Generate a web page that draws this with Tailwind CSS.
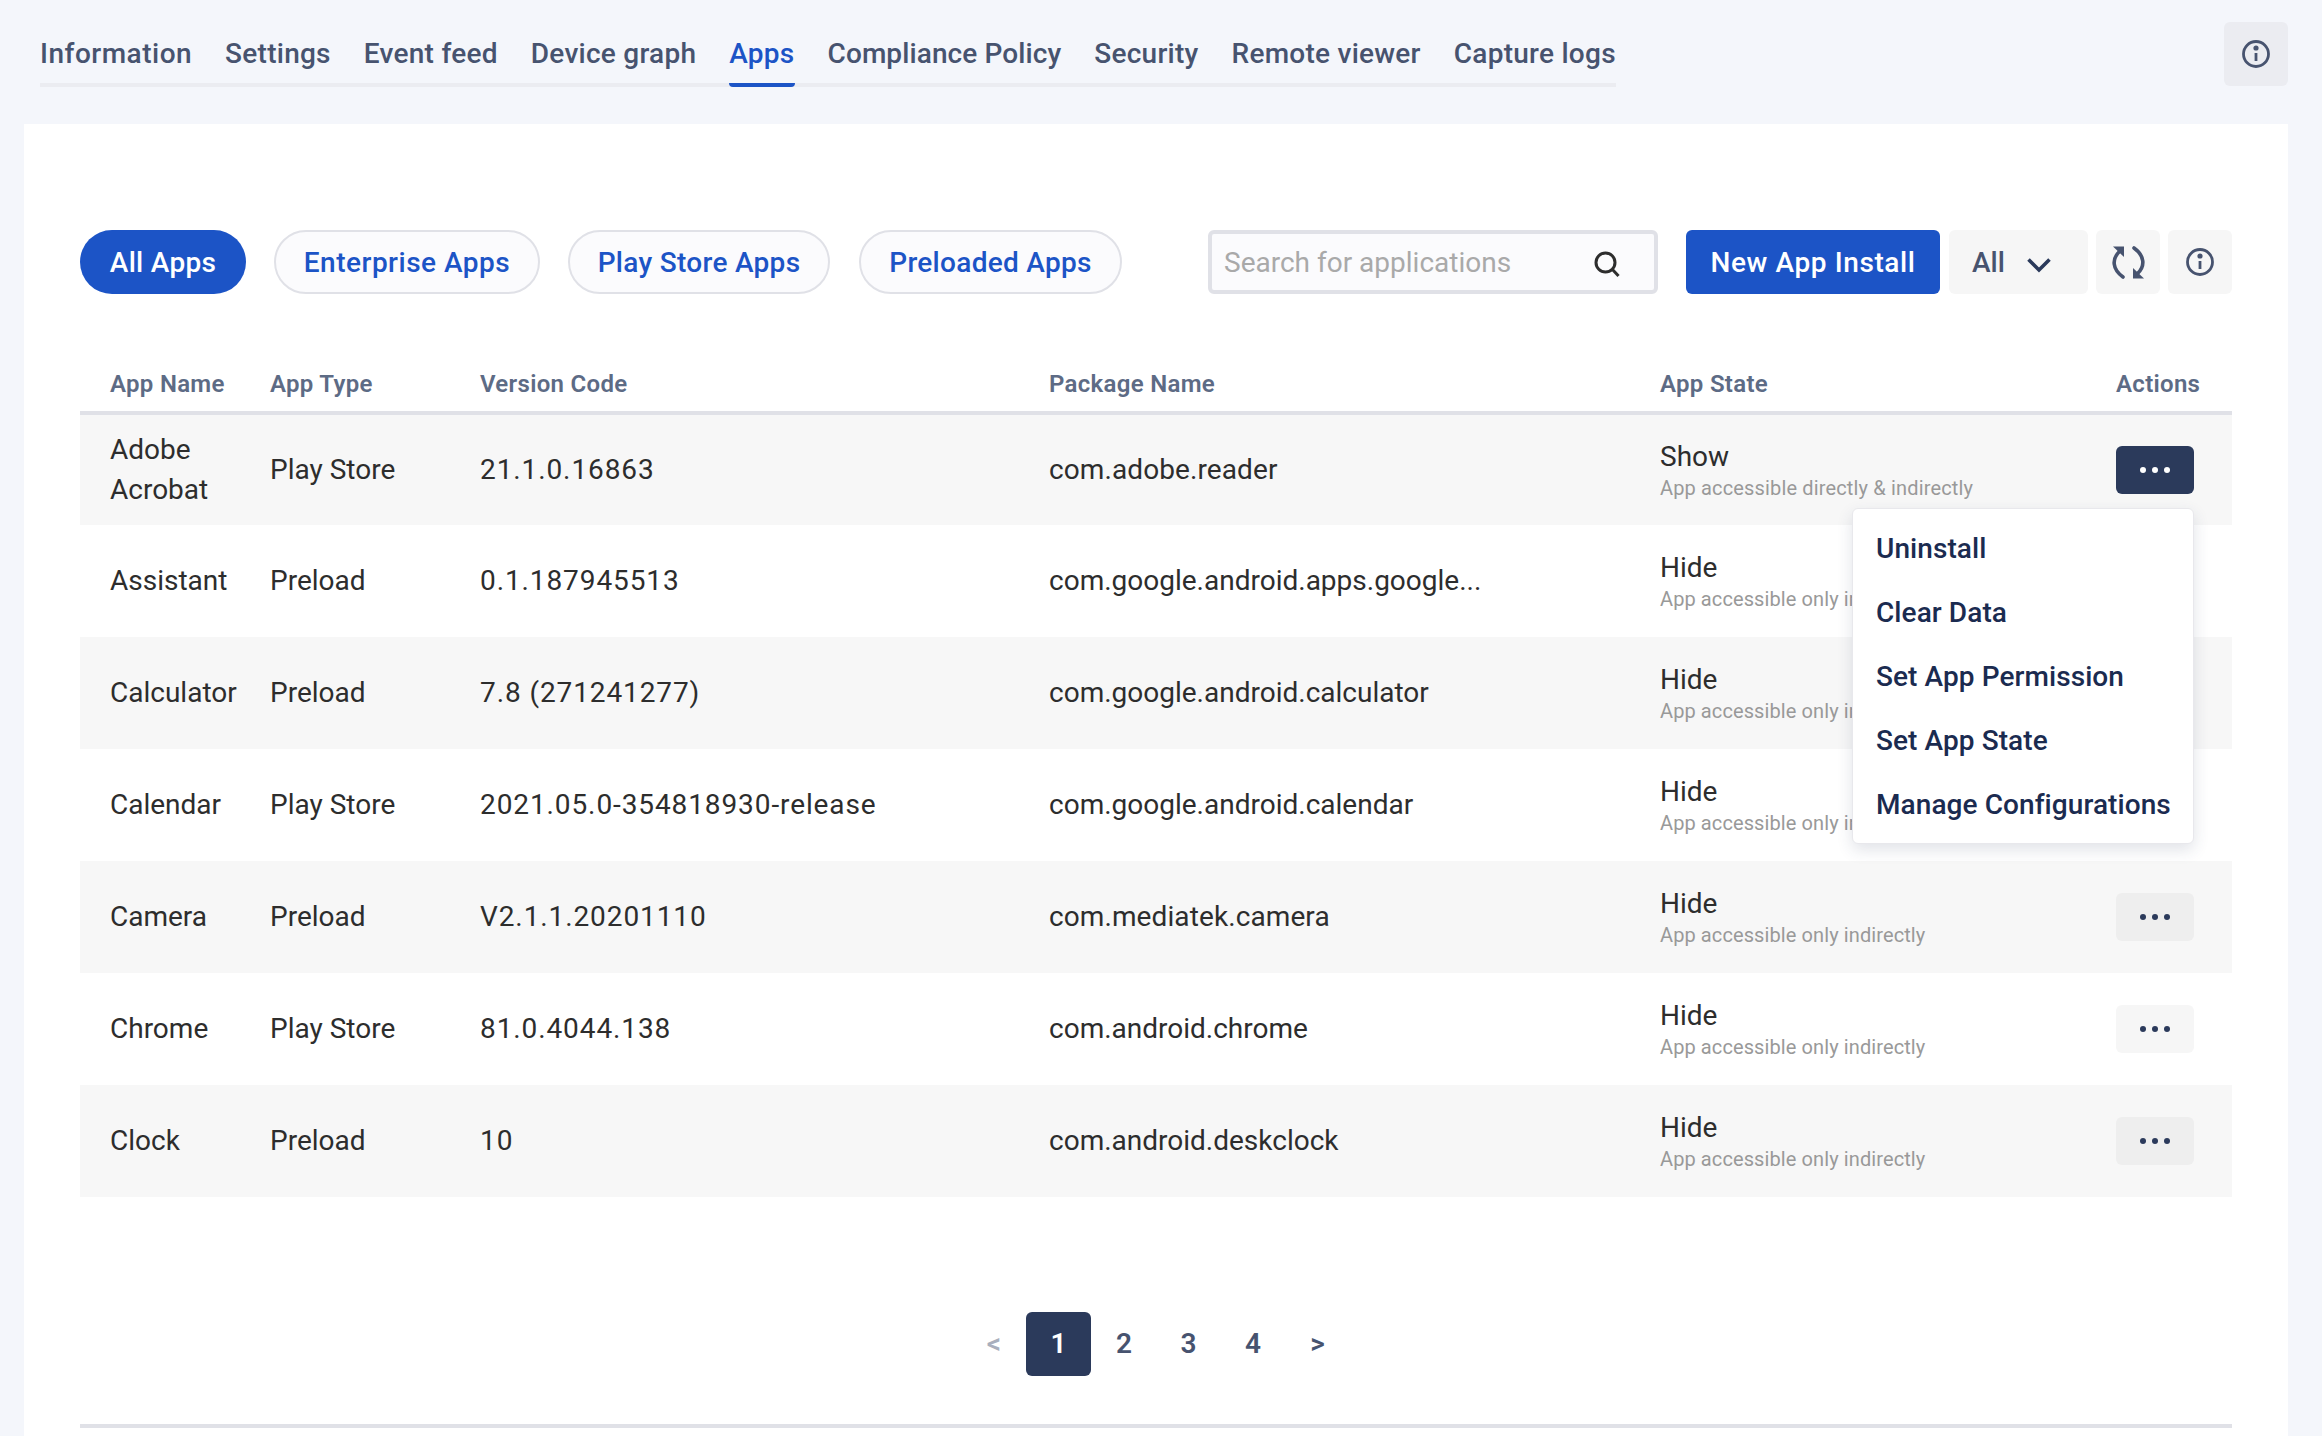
<!DOCTYPE html>
<html lang="en">
<head>
    <meta charset="UTF-8">
    <title>Apps</title>
    <script src="https://cdn.jsdelivr.net/npm/@tailwindcss/browser@4"></script>
</head>
<body class="bg-[#f4f6fb] font-['Roboto',sans-serif] text-[28px] text-[#2d2d2d] h-[1436px] overflow-hidden">
    <!-- tabs -->
    <div class="flex justify-between items-start pl-[40px] pr-[34px] pt-[22px] h-[124px]">
        <div class="flex gap-[33px] border-b-4 border-[#ebecf1] h-[65px] text-[#47536f] font-medium leading-[64px] tracking-[0.26px]">
            <a class="h-[65px] tracking-[0.5px]">Information</a>
            <a class="h-[65px]">Settings</a>
            <a class="h-[65px]">Event feed</a>
            <a class="h-[65px]">Device graph</a>
            <a class="h-[65px] text-[#1c54c6] border-b-4 border-[#1c54c6] rounded-b-sm">Apps</a>
            <a class="h-[65px] tracking-[0.1px]">Compliance Policy</a>
            <a class="h-[65px]">Security</a>
            <a class="h-[65px]">Remote viewer</a>
            <a class="h-[65px]">Capture logs</a>
        </div>
        <button class="w-[64px] h-[64px] rounded-md bg-[#ebecf1] flex items-center justify-center">
            <svg width="30" height="30" viewBox="0 0 30 30" fill="none" stroke="#47536f" stroke-width="2.8"><circle cx="15" cy="15" r="12.5"/><path d="M15 14v8"/><circle cx="15" cy="9" r="1.2" fill="#47536f"/></svg>
        </button>
    </div>

    <!-- panel -->
    <div class="relative bg-white ml-[24px] mr-[34px] h-[1312px] px-[56px] pt-[106px]">
        <!-- filters -->
        <div class="flex items-center h-[64px] leading-[66px]">
            <button class="w-[166px] h-[64px] rounded-full bg-[#1c54c6] text-white font-medium tracking-[0.3px]">All Apps</button>
            <button class="ml-[28px] w-[266px] h-[64px] rounded-full bg-[#fbfbfd] border-2 border-[#e0e1e7] text-[#1c54c6] font-medium tracking-[0.5px] leading-[62px]">Enterprise Apps</button>
            <button class="ml-[28px] w-[262px] h-[64px] rounded-full bg-[#fbfbfd] border-2 border-[#e0e1e7] text-[#1c54c6] font-medium tracking-[0.3px] leading-[62px]">Play Store Apps</button>
            <button class="ml-[29px] w-[263px] h-[64px] rounded-full bg-[#fbfbfd] border-2 border-[#e0e1e7] text-[#1c54c6] font-medium tracking-[0.3px] leading-[62px]">Preloaded Apps</button>
            <div class="ml-[86px] w-[450px] h-[64px] rounded-md bg-[#fbfbfd] border-4 border-[#e0e1e7] flex items-center justify-between pl-[12px] pr-[33px]">
                <span class="text-[#a9a9a9] pt-[2px]">Search for applications</span>
                <svg width="28" height="28" viewBox="0 0 28 28" fill="none" stroke="#2d2d2d" stroke-width="3" class="mt-[3px]"><circle cx="12.500" cy="12.500" r="9.500"/><path d="M19 19l6.500 7"/></svg>
            </div>
            <button class="ml-[28px] w-[254px] h-[64px] rounded-md bg-[#1c54c6] text-white font-medium tracking-[0.6px]">New App Install</button>
            <button class="ml-[9px] w-[139px] h-[64px] rounded-md bg-[#f6f6f6] text-[#47536f] font-medium flex items-center pl-[23px] gap-[22px]">
                <span class="pt-[2px]">All</span>
                <svg width="24" height="16" viewBox="0 0 24 16" fill="none" stroke="#2b3a5b" stroke-width="3.6" class="mt-[6px]"><path d="M1.500 2.500L12 13l10.500-10.500"/></svg>
            </button>
            <button class="ml-[8px] w-[64px] h-[64px] rounded-md bg-[#f6f6f6] flex items-center justify-center">
                <svg width="33" height="33" viewBox="0 0 33 33" fill="#47536f" stroke="#47536f" stroke-width="3.600" stroke-linecap="round"><path fill="none" d="M7 6C0 13 0 23 11 31"/><path stroke="none" d="M1 0.500H12V11Z"/><path fill="none" d="M22 2C33 10 33 20 26 27"/><path stroke="none" d="M32 32.500H21V22Z"/></svg>
            </button>
            <button class="ml-[8px] w-[64px] h-[64px] rounded-md bg-[#f6f6f6] flex items-center justify-center">
                <svg width="30" height="30" viewBox="0 0 30 30" fill="none" stroke="#47536f" stroke-width="2.8"><circle cx="15" cy="15" r="12.5"/><path d="M15 14v8"/><circle cx="15" cy="9" r="1.2" fill="#47536f"/></svg>
            </button>
        </div>

        <!-- apps table -->
        <table class="mt-[59px] w-[2152px] table-fixed border-collapse text-left">
            <colgroup>
                <col class="w-[160px]"><col class="w-[210px]"><col class="w-[569px]"><col class="w-[611px]"><col class="w-[456px]"><col class="w-[146px]">
            </colgroup>
            <thead class="text-[24px] text-[#5d6b85] font-semibold tracking-[0.3px]">
                <tr class="h-[60px] border-b-4 border-[#e0e1e7]">
                    <th class="pl-[30px] pt-[4px] font-semibold">App Name</th>
                    <th class="pl-[30px] pt-[4px] font-semibold">App Type</th>
                    <th class="pl-[30px] pt-[4px] font-semibold">Version Code</th>
                    <th class="pl-[30px] pt-[4px] font-semibold">Package Name</th>
                    <th class="pl-[30px] pt-[4px] font-semibold">App State</th>
                    <th class="pl-[30px] pt-[4px] font-semibold">Actions</th>
                </tr>
            </thead>
            <tbody>
                <tr class="h-[112px] bg-[#f7f7f7]">
                    <td class="pl-[30px] leading-[40px]">Adobe Acrobat</td><td class="pl-[30px]">Play Store</td><td class="pl-[30px] tracking-[0.9px]">21.1.0.16863</td><td class="pl-[30px] tracking-[0.1px]">com.adobe.reader</td>
                    <td class="pl-[30px]"><div class="leading-[36px]">Show</div><div class="text-[20px] leading-[26px] text-[#999] tracking-[0.15px]">App accessible directly &amp; indirectly</div></td>
                    <td class="pl-[30px]"><button class="w-[78px] h-[48px] rounded-md bg-[#2b3a5b] flex items-center justify-center gap-[6px]"><i class="w-[6px] h-[6px] rounded-full bg-white"></i><i class="w-[6px] h-[6px] rounded-full bg-white"></i><i class="w-[6px] h-[6px] rounded-full bg-white"></i></button></td>
                </tr>
                <tr class="h-[112px]">
                    <td class="pl-[30px]">Assistant</td><td class="pl-[30px]">Preload</td><td class="pl-[30px] tracking-[0.9px]">0.1.187945513</td><td class="pl-[30px]">com.google.android.apps.google...</td>
                    <td class="pl-[30px]"><div class="leading-[36px]">Hide</div><div class="text-[20px] leading-[26px] text-[#999] tracking-[0.1px]">App accessible only indirectly</div></td>
                    <td class="pl-[30px]"></td>
                </tr>
                <tr class="h-[112px] bg-[#f7f7f7]">
                    <td class="pl-[30px]">Calculator</td><td class="pl-[30px]">Preload</td><td class="pl-[30px] tracking-[0.9px]">7.8 (271241277)</td><td class="pl-[30px]">com.google.android.calculator</td>
                    <td class="pl-[30px]"><div class="leading-[36px]">Hide</div><div class="text-[20px] leading-[26px] text-[#999] tracking-[0.1px]">App accessible only indirectly</div></td>
                    <td class="pl-[30px]"></td>
                </tr>
                <tr class="h-[112px]">
                    <td class="pl-[30px]">Calendar</td><td class="pl-[30px]">Play Store</td><td class="pl-[30px] tracking-[0.9px]">2021.05.0-354818930-release</td><td class="pl-[30px]">com.google.android.calendar</td>
                    <td class="pl-[30px]"><div class="leading-[36px]">Hide</div><div class="text-[20px] leading-[26px] text-[#999] tracking-[0.1px]">App accessible only indirectly</div></td>
                    <td class="pl-[30px]"></td>
                </tr>
                <tr class="h-[112px] bg-[#f7f7f7]">
                    <td class="pl-[30px]">Camera</td><td class="pl-[30px]">Preload</td><td class="pl-[30px] tracking-[0.9px]">V2.1.1.20201110</td><td class="pl-[30px] tracking-[0.1px]">com.mediatek.camera</td>
                    <td class="pl-[30px]"><div class="leading-[36px]">Hide</div><div class="text-[20px] leading-[26px] text-[#999] tracking-[0.1px]">App accessible only indirectly</div></td>
                    <td class="pl-[30px]"><button class="w-[78px] h-[48px] rounded-md bg-[#eeeeee] flex items-center justify-center gap-[6px]"><i class="w-[6px] h-[6px] rounded-full bg-[#2b3a5b]"></i><i class="w-[6px] h-[6px] rounded-full bg-[#2b3a5b]"></i><i class="w-[6px] h-[6px] rounded-full bg-[#2b3a5b]"></i></button></td>
                </tr>
                <tr class="h-[112px]">
                    <td class="pl-[30px]">Chrome</td><td class="pl-[30px]">Play Store</td><td class="pl-[30px] tracking-[0.9px]">81.0.4044.138</td><td class="pl-[30px]">com.android.chrome</td>
                    <td class="pl-[30px]"><div class="leading-[36px]">Hide</div><div class="text-[20px] leading-[26px] text-[#999] tracking-[0.1px]">App accessible only indirectly</div></td>
                    <td class="pl-[30px]"><button class="w-[78px] h-[48px] rounded-md bg-[#f6f6f6] flex items-center justify-center gap-[6px]"><i class="w-[6px] h-[6px] rounded-full bg-[#2b3a5b]"></i><i class="w-[6px] h-[6px] rounded-full bg-[#2b3a5b]"></i><i class="w-[6px] h-[6px] rounded-full bg-[#2b3a5b]"></i></button></td>
                </tr>
                <tr class="h-[112px] bg-[#f7f7f7]">
                    <td class="pl-[30px]">Clock</td><td class="pl-[30px]">Preload</td><td class="pl-[30px] tracking-[0.9px]">10</td><td class="pl-[30px]">com.android.deskclock</td>
                    <td class="pl-[30px]"><div class="leading-[36px]">Hide</div><div class="text-[20px] leading-[26px] text-[#999] tracking-[0.1px]">App accessible only indirectly</div></td>
                    <td class="pl-[30px]"><button class="w-[78px] h-[48px] rounded-md bg-[#eeeeee] flex items-center justify-center gap-[6px]"><i class="w-[6px] h-[6px] rounded-full bg-[#2b3a5b]"></i><i class="w-[6px] h-[6px] rounded-full bg-[#2b3a5b]"></i><i class="w-[6px] h-[6px] rounded-full bg-[#2b3a5b]"></i></button></td>
                </tr>
            </tbody>
        </table>

        <!-- actions menu -->
        <div class="absolute left-[1828px] top-[384px] w-[342px] h-[336px] bg-white rounded-md border border-[#e8e8ec] shadow-[0_6px_16px_rgba(43,58,91,0.14)] py-[8px] pl-[23px] text-[#1b2b50] font-medium tracking-[0.08px]">
            <div class="h-[64px] leading-[64px]">Uninstall</div>
            <div class="h-[64px] leading-[64px]">Clear Data</div>
            <div class="h-[64px] leading-[64px]">Set App Permission</div>
            <div class="h-[64px] leading-[64px]">Set App State</div>
            <div class="h-[64px] leading-[64px]">Manage Configurations</div>
        </div>

        <!-- pagination -->
        <div class="mt-[115px] flex justify-center items-center font-semibold text-[#47536f]">
            <span class="w-[64px] text-center text-[#a9afbd]">&lt;</span>
            <span class="w-[65px] h-[64px] rounded-md bg-[#2b3a5b] text-white flex items-center justify-center mr-[1px]">1</span>
            <span class="w-[64px] text-center">2</span>
            <span class="w-[65px] text-center">3</span>
            <span class="w-[64px] text-center">4</span>
            <span class="w-[65px] text-center">&gt;</span>
        </div>
        <div class="mt-[48px] h-[4px] bg-[#e0e1e7]"></div>
    </div>
</body>
</html>
